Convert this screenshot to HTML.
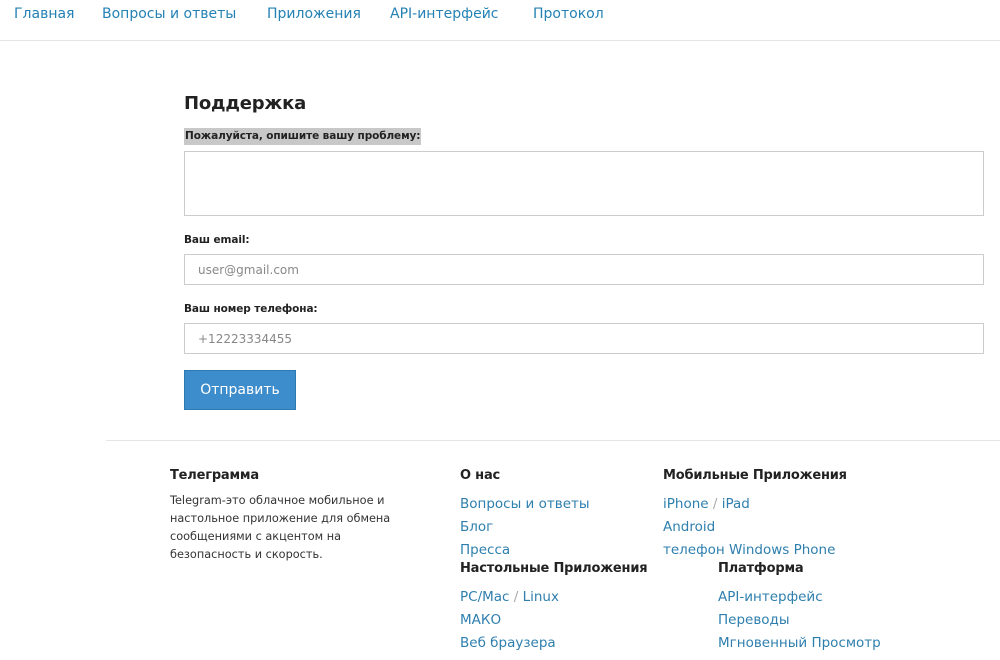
<!DOCTYPE html>
<html><head><meta charset="utf-8"><style>
*{box-sizing:border-box;margin:0;padding:0}
body{width:1000px;height:660px;overflow:hidden;background:#fff;font-family:"DejaVu Sans","Liberation Sans",sans-serif;color:#222;position:relative}
.a{position:absolute;white-space:nowrap}
.nav{font-size:14px;color:#2481b4;top:6px}
.lnk{color:#2e7fae;font-size:13.5px}
.h{font-weight:bold;font-size:13px;color:#222;letter-spacing:-0.2px}
.lab{font-weight:bold;font-size:10.5px;color:#222;letter-spacing:-0.1px}
.box{position:absolute;border:1px solid #ccc;background:#fff}
.ph{font-size:12px;color:#888}
.p{font-size:11.3px;color:#333;line-height:18px}
</style></head><body>
<div class="a nav" style="left:14px">Главная</div>
<div class="a nav" style="left:102px">Вопросы и ответы</div>
<div class="a nav" style="left:267px">Приложения</div>
<div class="a nav" style="left:390px">API-интерфейс</div>
<div class="a nav" style="left:533px">Протокол</div>
<div style="position:absolute;left:0;top:40px;width:1000px;height:1px;background:#e6e6e6"></div>

<div class="a" style="left:184px;top:93px;font-size:18px;font-weight:bold;color:#222;letter-spacing:-0.2px">Поддержка</div>
<div class="a lab" style="left:184px;top:128px;background:#c8c8c8;padding:1px 1px;height:17px;line-height:15px">Пожалуйста, опишите вашу проблему:</div>
<div class="box" style="left:184px;top:151px;width:800px;height:65px"></div>
<div class="a lab" style="left:184px;top:234px">Ваш email:</div>
<div class="box" style="left:184px;top:254px;width:800px;height:31px"><span class="a ph" style="left:13px;top:8px">user@gmail.com</span></div>
<div class="a lab" style="left:184px;top:303px">Ваш номер телефона:</div>
<div class="box" style="left:184px;top:323px;width:800px;height:31px"><span class="a ph" style="left:13px;top:8px">+12223334455</span></div>
<div class="a" style="left:184px;top:370px;width:112px;height:40px;background:#3d8ccb;border:1px solid #2f79b3;color:#fff;font-size:14px;line-height:38px;text-align:center">Отправить</div>

<div style="position:absolute;left:106px;top:440px;width:894px;height:1px;background:#e6e6e6"></div>
<div class="a h" style="left:170px;top:468px">Телеграмма</div>
<div class="a p" style="left:170px;top:492px">Telegram-это облачное мобильное и<br>настольное приложение для обмена<br>сообщениями с акцентом на<br>безопасность и скорость.</div>
<div class="a h" style="left:460px;top:468px">О нас</div>
<div class="a lnk" style="left:460px;top:496px">Вопросы и ответы</div>
<div class="a lnk" style="left:460px;top:519px">Блог</div>
<div class="a lnk" style="left:460px;top:542px">Пресса</div>
<div class="a h" style="left:460px;top:561px">Настольные Приложения</div>
<div class="a lnk" style="left:460px;top:589px">PC/Mac <span style="color:#aaa">/</span> Linux</div>
<div class="a lnk" style="left:460px;top:612px">МАКО</div>
<div class="a lnk" style="left:460px;top:635px">Веб браузера</div>
<div class="a h" style="left:663px;top:468px">Мобильные Приложения</div>
<div class="a lnk" style="left:663px;top:496px">iPhone <span style="color:#aaa">/</span> iPad</div>
<div class="a lnk" style="left:663px;top:519px">Android</div>
<div class="a lnk" style="left:663px;top:542px">телефон Windows Phone</div>
<div class="a h" style="left:718px;top:561px">Платформа</div>
<div class="a lnk" style="left:718px;top:589px">API-интерфейс</div>
<div class="a lnk" style="left:718px;top:612px">Переводы</div>
<div class="a lnk" style="left:718px;top:635px">Мгновенный Просмотр</div>
</body></html>
